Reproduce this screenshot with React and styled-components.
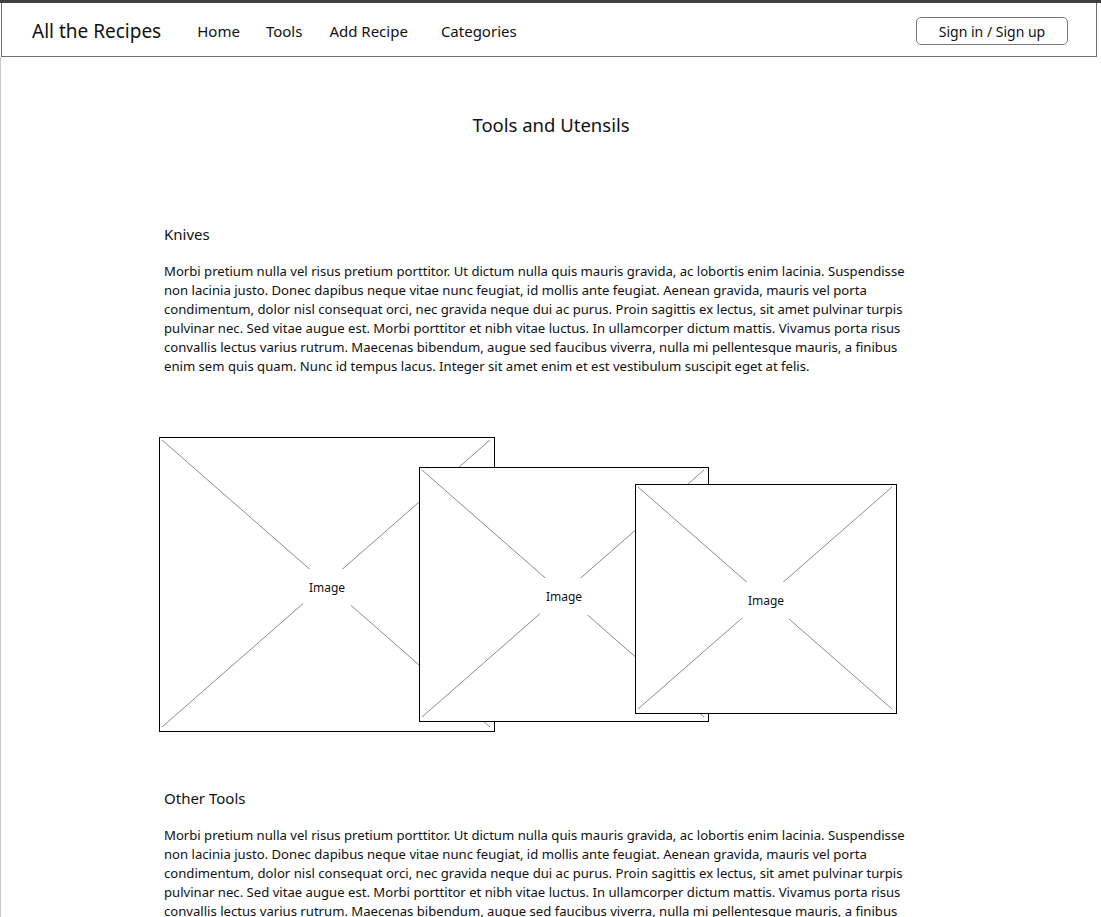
import React from 'react';
import styled, { createGlobalStyle } from 'styled-components';

const GlobalStyle = createGlobalStyle`
  body {
    margin: 0;
    background: #fff;
    font-family: "Noto Sans", "Open Sans", sans-serif;
    color: #111;
  }
`;

const Page = styled.div`
  width: 1101px;
  min-height: 917px;
  border-top: 3px solid #404040;
  box-sizing: border-box;
`;

const Header = styled.header`
  height: 54px;
  margin-left: 1px;
  width: 1096px;
  box-sizing: border-box;
  border: 1px solid #6e6e6e;
  border-top: none;
  display: flex;
  align-items: center;
  padding: 0 32px 0 30px;
`;

const Brand = styled.div`
  font-size: 19px;
  margin-right: 36px;
  padding-top: 2px;
`;

const Nav = styled.nav`
  display: flex;
  font-size: 15px;
  flex: 1;
  padding-top: 2px;
`;

const NavLink = styled.a`
  color: #111;
  text-decoration: none;
  margin-left: ${(p) => p.$gap || 0}px;
`;

const SignButton = styled.button`
  width: 152px;
  height: 28px;
  border: 1px solid #777;
  border-radius: 5px;
  background: #fff;
  font-family: inherit;
  font-size: 14px;
  color: #111;
  padding: 0;
  margin-top: 3px;
  margin-right: -4px;
`;

const Main = styled.main`
  border-left: 1px solid #c6c6c6;
  min-height: 860px;
  padding-bottom: 40px;
`;

const Title = styled.h1`
  margin: 0;
  padding-top: 55px;
  text-align: center;
  font-size: 18.5px;
  font-weight: 400;
`;

const Section = styled.section`
  padding-left: 163px;
  width: 750px;
  margin-top: ${(p) => p.$top}px;
`;

const Heading = styled.h2`
  margin: 0;
  font-size: 15px;
  font-weight: 400;
`;

const Text = styled.p`
  margin: 18px 0 0;
  font-size: 13.12px;
  line-height: 19px;
`;

const Collage = styled.div`
  position: relative;
  height: 295px;
  margin: 61px 0 0 158px;
`;

const Frame = styled.div`
  position: absolute;
  left: ${(p) => p.$x}px;
  top: ${(p) => p.$y}px;
  width: ${(p) => p.$w}px;
  height: ${(p) => p.$h}px;
  box-sizing: border-box;
  border: 1px solid #000;
  background: #fff;
  display: flex;
  align-items: center;
  justify-content: center;

  svg {
    position: absolute;
    inset: 0;
    width: 100%;
    height: 100%;
  }
`;

const Label = styled.span`
  position: relative;
  background: #fff;
  font-size: 12px;
  padding: 10px 6px;
  margin-top: ${(p) => p.$shift}px;
`;

const lorem =
  'Morbi pretium nulla vel risus pretium porttitor. Ut dictum nulla quis mauris gravida, ac lobortis enim lacinia. Suspendisse non lacinia justo. Donec dapibus neque vitae nunc feugiat, id mollis ante feugiat. Aenean gravida, mauris vel porta condimentum, dolor nisl consequat orci, nec gravida neque dui ac purus. Proin sagittis ex lectus, sit amet pulvinar turpis pulvinar nec. Sed vitae augue est. Morbi porttitor et nibh vitae luctus. In ullamcorper dictum mattis. Vivamus porta risus convallis lectus varius rutrum. Maecenas bibendum, augue sed faucibus viverra, nulla mi pellentesque mauris, a finibus enim sem quis quam. Nunc id tempus lacus. Integer sit amet enim et est vestibulum suscipit eget at felis.';

const images = [
  { x: 0, y: 0, w: 336, h: 295, shift: 6 },
  { x: 260, y: 30, w: 290, h: 255, shift: 4 },
  { x: 476, y: 47, w: 262, h: 230, shift: 2 },
];

const Placeholder = ({ x, y, w, h, shift }) => (
  <Frame $x={x} $y={y} $w={w} $h={h}>
    <svg viewBox={`0 0 ${w} ${h}`} preserveAspectRatio="none">
      <line x1="2" y1="2" x2={w - 4} y2={h - 4} stroke="#8a8a8a" strokeWidth="1" />
      <line x1={w - 4} y1="2" x2="2" y2={h - 4} stroke="#8a8a8a" strokeWidth="1" />
    </svg>
    <Label $shift={shift}>Image</Label>
  </Frame>
);

const App = () => (
  <Page>
    <GlobalStyle />
    <Header>
      <Brand>All the Recipes</Brand>
      <Nav>
        <NavLink href="#">Home</NavLink>
        <NavLink href="#" $gap={26}>Tools</NavLink>
        <NavLink href="#" $gap={27}>Add Recipe</NavLink>
        <NavLink href="#" $gap={33}>Categories</NavLink>
      </Nav>
      <SignButton>Sign in / Sign up</SignButton>
    </Header>
    <Main>
      <Title>Tools and Utensils</Title>
      <Section $top={87}>
        <Heading>Knives</Heading>
        <Text>{lorem}</Text>
      </Section>
      <Collage>
        {images.map((img, i) => (
          <Placeholder key={i} {...img} />
        ))}
      </Collage>
      <Section $top={56}>
        <Heading>Other Tools</Heading>
        <Text>{lorem}</Text>
      </Section>
    </Main>
  </Page>
);

export default App;
